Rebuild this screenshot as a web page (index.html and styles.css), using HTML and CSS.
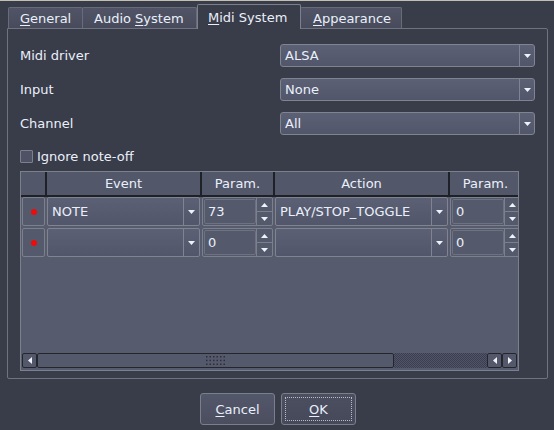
FILE: index.html
```html
<!DOCTYPE html>
<html>
<head>
<meta charset="utf-8">
<link rel="stylesheet" href="styles.css">
</head>
<body>
<div class="window">
  <div class="topline"></div>
  <div class="tabbar">
    <div class="tab t-general"><span><u>G</u>eneral</span></div>
    <div class="tab t-audio"><span>Audio <u>S</u>ystem</span></div>
    <div class="tab t-midi"><span><u>M</u>idi System</span></div>
    <div class="tab t-appear"><span><u>A</u>ppearance</span></div>
  </div>
  <div class="pane">
    <div class="form">
      <div class="label">Midi driver</div>
      <div class="combo"><span class="val">ALSA</span><span class="drop"><svg width="7" height="4" viewBox="0 0 7 4"><path d="M0 0H7L3.5 4Z" fill="#eef2fb"/></svg></span></div>
      <div class="label">Input</div>
      <div class="combo"><span class="val">None</span><span class="drop"><svg width="7" height="4" viewBox="0 0 7 4"><path d="M0 0H7L3.5 4Z" fill="#eef2fb"/></svg></span></div>
      <div class="label">Channel</div>
      <div class="combo"><span class="val">All</span><span class="drop"><svg width="7" height="4" viewBox="0 0 7 4"><path d="M0 0H7L3.5 4Z" fill="#eef2fb"/></svg></span></div>
    </div>
    <div class="check"><span class="box"></span><span>Ignore note-off</span></div>
    <div class="table">
      <div class="grid head">
        <div class="hcell"></div>
        <div class="hcell">Event</div>
        <div class="hcell">Param.</div>
        <div class="hcell">Action</div>
        <div class="hcell">Param.</div>
      </div>
      <div class="grid row">
        <div class="rowhead"><span class="dot"></span></div>
        <div class="combo tcombo"><span class="val">NOTE</span><span class="drop"><svg width="7" height="4" viewBox="0 0 7 4"><path d="M0 0H7L3.5 4Z" fill="#eef2fb"/></svg></span></div>
        <div class="spin"><span class="field">73</span><span class="btns"><span><svg width="7" height="4" viewBox="0 0 7 4"><path d="M0 4H7L3.5 0Z" fill="#eef2fb"/></svg></span><span><svg width="7" height="4" viewBox="0 0 7 4"><path d="M0 0H7L3.5 4Z" fill="#eef2fb"/></svg></span></span></div>
        <div class="combo tcombo"><span class="val">PLAY/STOP_TOGGLE</span><span class="drop"><svg width="7" height="4" viewBox="0 0 7 4"><path d="M0 0H7L3.5 4Z" fill="#eef2fb"/></svg></span></div>
        <div class="spin"><span class="field">0</span><span class="btns"><span><svg width="7" height="4" viewBox="0 0 7 4"><path d="M0 4H7L3.5 0Z" fill="#eef2fb"/></svg></span><span><svg width="7" height="4" viewBox="0 0 7 4"><path d="M0 0H7L3.5 4Z" fill="#eef2fb"/></svg></span></span></div>
      </div>
      <div class="grid row row2">
        <div class="rowhead"><span class="dot"></span></div>
        <div class="combo tcombo"><span class="val"></span><span class="drop"><svg width="7" height="4" viewBox="0 0 7 4"><path d="M0 0H7L3.5 4Z" fill="#eef2fb"/></svg></span></div>
        <div class="spin"><span class="field">0</span><span class="btns"><span><svg width="7" height="4" viewBox="0 0 7 4"><path d="M0 4H7L3.5 0Z" fill="#eef2fb"/></svg></span><span><svg width="7" height="4" viewBox="0 0 7 4"><path d="M0 0H7L3.5 4Z" fill="#eef2fb"/></svg></span></span></div>
        <div class="combo tcombo"><span class="val"></span><span class="drop"><svg width="7" height="4" viewBox="0 0 7 4"><path d="M0 0H7L3.5 4Z" fill="#eef2fb"/></svg></span></div>
        <div class="spin"><span class="field">0</span><span class="btns"><span><svg width="7" height="4" viewBox="0 0 7 4"><path d="M0 4H7L3.5 0Z" fill="#eef2fb"/></svg></span><span><svg width="7" height="4" viewBox="0 0 7 4"><path d="M0 0H7L3.5 4Z" fill="#eef2fb"/></svg></span></span></div>
      </div>
      <div class="spacer"></div>
      <div class="hscroll">
        <div class="sbtn"><svg width="4" height="7" viewBox="0 0 4 7"><path d="M4 0V7L0 3.5Z" fill="#f2f4fa"/></svg></div>
        <div class="handle"><svg width="19" height="9" viewBox="0 0 19 9" fill="#2c2f38"><rect x="0" y="0" width="1.5" height="1.5"/><rect x="3.5" y="0" width="1.5" height="1.5"/><rect x="7" y="0" width="1.5" height="1.5"/><rect x="10.5" y="0" width="1.5" height="1.5"/><rect x="14" y="0" width="1.5" height="1.5"/><rect x="17.5" y="0" width="1.5" height="1.5"/><rect x="0" y="3.7" width="1.5" height="1.5"/><rect x="3.5" y="3.7" width="1.5" height="1.5"/><rect x="7" y="3.7" width="1.5" height="1.5"/><rect x="10.5" y="3.7" width="1.5" height="1.5"/><rect x="14" y="3.7" width="1.5" height="1.5"/><rect x="17.5" y="3.7" width="1.5" height="1.5"/><rect x="0" y="7.5" width="1.5" height="1.5"/><rect x="3.5" y="7.5" width="1.5" height="1.5"/><rect x="7" y="7.5" width="1.5" height="1.5"/><rect x="10.5" y="7.5" width="1.5" height="1.5"/><rect x="14" y="7.5" width="1.5" height="1.5"/><rect x="17.5" y="7.5" width="1.5" height="1.5"/></svg></div>
        <div class="track"></div>
        <div class="sbtn"><svg width="4" height="7" viewBox="0 0 4 7"><path d="M4 0V7L0 3.5Z" fill="#f2f4fa"/></svg></div>
        <div class="sbtn"><svg width="4" height="7" viewBox="0 0 4 7"><path d="M0 0V7L4 3.5Z" fill="#f2f4fa"/></svg></div>
      </div>
    </div>
  </div>
  <div class="buttons">
    <div class="btn"><span><u>C</u>ancel</span></div>
    <div class="btn focus"><span class="focusrect"><span><u>O</u>K</span></span></div>
  </div>
</div>
</body>
</html>
```

FILE: styles.css
```css
* { box-sizing: border-box; }
html, body { margin: 0; padding: 0; }
body {
  width: 554px;
  height: 430px;
  background: #393c49;
  font-family: "DejaVu Sans", sans-serif;
  font-size: 13px;
  color: #eaf0fb;
  overflow: hidden;
}
u { text-decoration-thickness: 1px; text-underline-offset: 2px; }
.window { height: 430px; display: flex; flex-direction: column; }
.topline { height: 1px; background: #c3bfb3; }

.tabbar { height: 27px; display: flex; align-items: flex-end; padding-left: 8px; }
.tab {
  height: 21px;
  border: 1px solid #686c7a;
  border-bottom: none;
  border-radius: 2px 2px 0 0;
  background: linear-gradient(#505466, #474b5c);
  display: flex;
  align-items: center;
  padding-left: 11px;
  white-space: nowrap;
}
.t-general { width: 75px; }
.t-audio { width: 115px; margin-left: -1px; }
.t-midi {
  width: 104px;
  height: 25px;
  margin-bottom: -1px;
  padding-left: 10px;
  background: #393c49;
  border-color: #7c808c;
  position: relative;
  z-index: 1;
}
.t-appear { width: 102px; margin-left: -1px; padding-left: 12px; }

.pane {
  margin: 0 6px 0 7px;
  height: 351px;
  border: 1px solid #6f7380;
  border-radius: 0 2px 2px 2px;
  padding: 15px 12px 7px 12px;
  display: flex;
  flex-direction: column;
}
.form {
  display: grid;
  grid-template-columns: 260px 1fr;
  grid-auto-rows: 23px;
  row-gap: 11px;
  align-items: center;
}
.combo {
  height: 23px;
  display: flex;
  border: 1px solid #80848f;
  border-radius: 3px;
  background: linear-gradient(#5c6074, #52566a);
}
.combo .val { flex: 1; padding-left: 4px; display: flex; align-items: center; white-space: nowrap; overflow: hidden; }
.combo .drop {
  width: 15px;
  border-left: 1px solid #80848f;
  display: flex;
  align-items: center;
  justify-content: center;
}

.check { margin-top: 15px; height: 13px; display: flex; align-items: center; gap: 4px; }
.box {
  width: 13px;
  height: 13px;
  border: 1px solid #7c808c;
  border-radius: 1px;
  background: #4e5264;
}

.table {
  margin-top: 8px;
  width: 499px;
  height: 200px;
  border: 1px solid #7c808c;
  background: #575b6e;
  display: flex;
  flex-direction: column;
  overflow: hidden;
}
.grid {
  display: grid;
  grid-template-columns: 24px 153px 71px 173px 71px;
  column-gap: 2px;
  flex: none;
}
.head { height: 25px; background: #1f2128; padding-bottom: 2px; }
.hcell {
  background: #53576a;
  display: flex;
  align-items: center;
  justify-content: center;
}
.row { height: 29px; }
.row2 { margin-top: 2px; }
.rowhead {
  margin-left: 1px;
  border: 1px solid #7c808c;
  border-radius: 2px;
  background: #55596c;
  display: flex;
  align-items: center;
  justify-content: center;
}
.dot { width: 6px; height: 6px; border-radius: 3px; background: #ee0b0b; }
.tcombo { height: 29px; border-radius: 2px; }
.tcombo .drop { width: 16px; }
.spin {
  display: flex;
  border: 1px solid #7c808c;
  border-radius: 2px;
  background: #55596c;
}
.spin .field {
  flex: 1;
  margin: 1px 0 1px 1px;
  border: 1px solid #6d7180;
  border-radius: 2px;
  display: flex;
  align-items: center;
  padding-left: 3px;
}
.spin .btns { width: 16px; display: flex; flex-direction: column; }
.spin .btns span {
  flex: 1;
  border-left: 1px solid #7c808c;
  display: flex;
  align-items: center;
  justify-content: center;
}
.spin .btns span + span { border-top: 1px solid #7c808c; }

.spacer { flex: 1; }
.hscroll {
  height: 15px;
  margin: 0 1px 2px 1px;
  display: flex;
  flex: none;
}
.sbtn {
  width: 15px;
  border: 1px solid #24262e;
  border-radius: 2px;
  background: #54586b;
  display: flex;
  align-items: center;
  justify-content: center;
}
.handle {
  width: 357px;
  border: 1px solid #24262e;
  border-radius: 2px;
  background: #55596c;
  display: flex;
  align-items: center;
  justify-content: center;
}
.track {
  flex: 1;
  background: repeating-conic-gradient(#3b3f4d 0 25%, #50546a 0 50%) 0 0 / 2px 2px;
}

.buttons { margin-top: 14px; padding-left: 2px; display: flex; justify-content: center; gap: 6px; }
.btn {
  width: 75px;
  height: 32px;
  border: 1px solid #7b7f8b;
  border-radius: 3px;
  background: linear-gradient(#53576a, #4a4e5f);
  display: flex;
  align-items: center;
  justify-content: center;
}
.focus { padding: 3px; align-items: stretch; background: linear-gradient(#4b4f60, #45495a); }
.focusrect {
  flex: 1;
  border: 1px dotted #b8bcc6;
  display: flex;
  align-items: center;
  justify-content: center;
}
```
